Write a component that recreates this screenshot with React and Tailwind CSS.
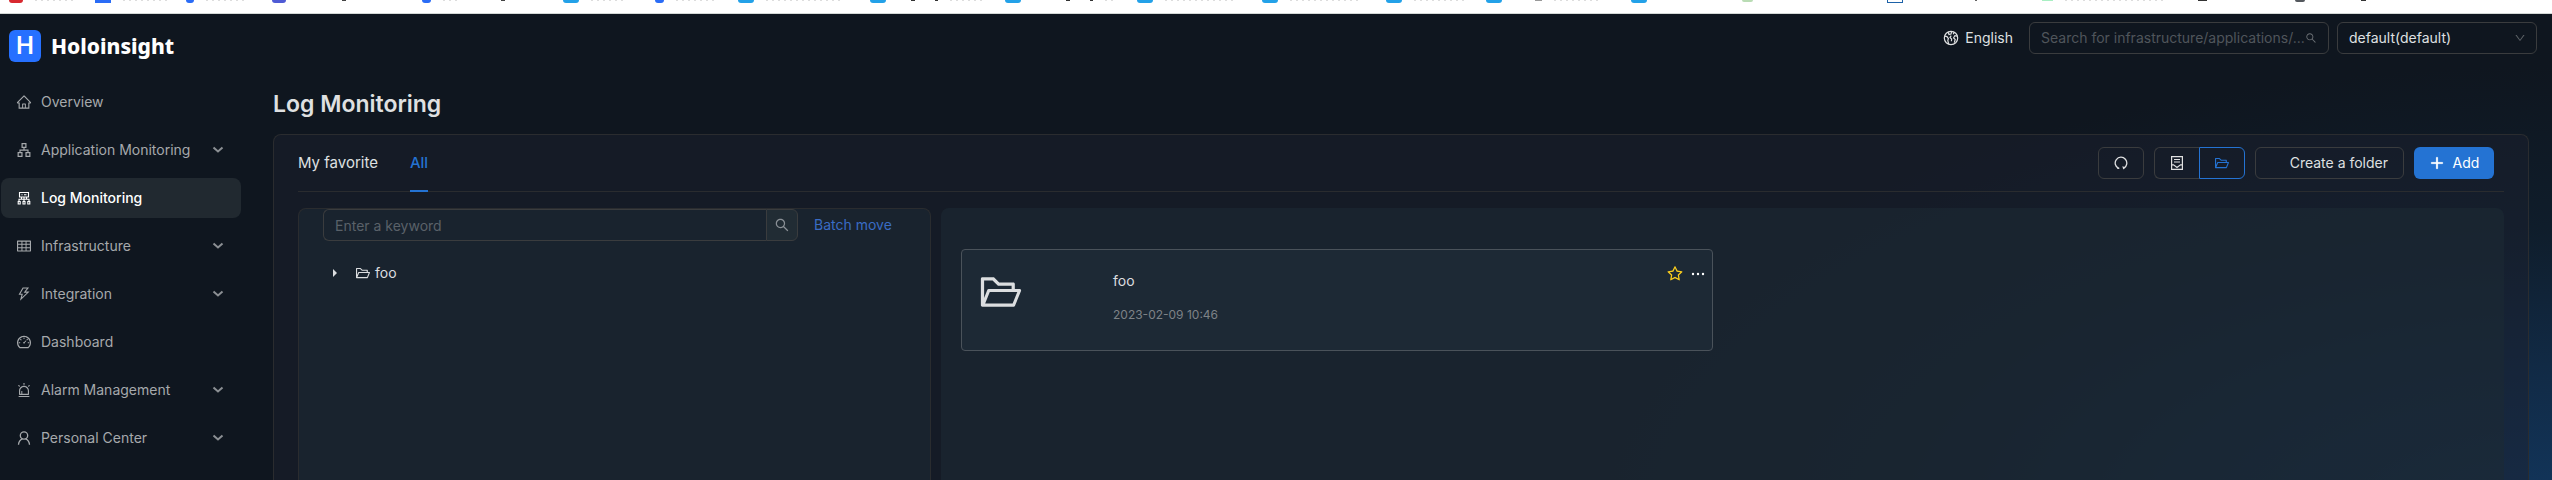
import {
  AiOutlineHome,
  AiOutlineApartment,
  AiOutlineTable,
  AiOutlineThunderbolt,
  AiOutlineDashboard,
  AiOutlineAlert,
  AiOutlineFolderOpen,
  AiOutlineSearch,
  AiOutlineDown,
  AiOutlinePlus,
  AiOutlineStar,
} from "react-icons/ai";

/* Bottom edge of the browser's bookmark bar: [space before, icon width, icon classes, label width] */
const bookmarks = [
  [9, 14, "h-[3px] rounded-b-sm bg-[#d8282f]", 50],
  [22, 16, "h-[3px] bg-[#2a6cf6]", 58],
  [17, 8, "h-[3px] rounded-b bg-[#2a6cf6]", 50],
  [28, 14, "h-[3px] rounded-b bg-[#4f5bd5]", 0],
  [56, 4, "h-px bg-[#444444]", 0],
  [76, 9, "h-[3px] rounded-b-full bg-[#2a6cf6]", 30],
  [40, 4, "h-px bg-[#444444]", 0],
  [58, 16, "h-[3px] rounded-b-sm bg-[#23a1e8]", 44],
  [32, 9, "h-[3px] rounded-b-full bg-[#2a6cf6]", 50],
  [24, 16, "h-[3px] rounded-b-sm bg-[#23a1e8]", 90],
  [26, 16, "h-[3px] rounded-b-sm bg-[#23a1e8]", 0],
  [25, 4, "h-px bg-[#333333]", 0],
  [20, 3, "h-px bg-[#333333]", 44],
  [23, 16, "h-[3px] rounded-b-sm bg-[#23a1e8]", 0],
  [45, 4, "h-px bg-[#333333]", 0],
  [20, 3, "h-px bg-[#333333]", 20],
  [24, 16, "h-[3px] rounded-b-sm bg-[#23a1e8]", 84],
  [25, 16, "h-[3px] rounded-b-sm bg-[#23a1e8]", 84],
  [24, 16, "h-[3px] rounded-b-sm bg-[#23a1e8]", 66],
  [18, 16, "h-[3px] rounded-b-sm bg-[#23a1e8]", 0],
  [33, 7, "h-px bg-[#999999]", 60],
  [29, 16, "h-[3px] rounded-b-sm bg-[#23a1e8]", 0],
  [95, 11, "h-[2px] rounded-b bg-[#b9dcb4]", 0],
  [134, 16, "h-[3px] border border-t-0 border-[#1d62a8]", 0],
  [72, 2, "h-px bg-[#666666]", 0],
  [65, 11, "h-px bg-[#a9efc3]", 110],
  [35, 9, "h-px bg-[#333333]", 0],
  [88, 10, "h-[2px] rounded-b-full bg-[#54585e]", 0],
  [56, 5, "h-px bg-[#333333]", 0],
];

function LogIcon() {
  return (
    <svg viewBox="0 0 16 16" fill="none" stroke="currentColor" strokeWidth="1.1" aria-hidden="true">
      <path d="M3.500 2.500h9v4.500h-9zM5.500 4.800h1M8 4.800h2.500M8 7v2.200M3 11.500V9.200h10v2.300M8 9.200v2.300M5.500 7v2M10.500 7v2" />
      <path d="M2.200 14v-2.500h2V14zM7 14v-2.500h2V14zM11.800 14v-2.500h2V14z" />
    </svg>
  );
}

function PersonIcon() {
  return (
    <svg viewBox="0 0 16 16" fill="none" stroke="currentColor" strokeWidth="1.3" aria-hidden="true">
      <circle cx="8" cy="5.500" r="3.700" />
      <path d="M2.500 14.700C2.700 11.400 4.400 9.700 6.500 8.900M13.500 14.700C13.300 11.400 11.600 9.700 9.500 8.900" />
    </svg>
  );
}

function EarthIcon() {
  return (
    <svg viewBox="0 0 16 16" className="size-4" fill="none" stroke="currentColor" strokeWidth="1.2" aria-hidden="true">
      <circle cx="8" cy="8" r="6.700" />
      <path d="M1.800 6.200l2.200.400 1.400 2-.600 1.800.800 3.600M5.200 2.200l.800 2.300 2-.500.600-2.400M8.200 5.600l-1.200 1.800 1.600 1.600-.200 2.200M14.300 6.200l-2.400-.600-1.300 2.200 1.600 1.700-.900 3.200M11.200 2.400l-1 1.800" />
    </svg>
  );
}

function RefreshIcon() {
  return (
    <svg viewBox="0 0 14 14" className="size-3.5" fill="none" stroke="currentColor" strokeWidth="1.300" aria-hidden="true">
      <path d="M4.600 12.300A5.800 5.800 0 1 1 9.800 12.100" />
      <path d="M8.300 10.300l3.200.900-2.200 2.400z" fill="currentColor" stroke="none" />
      <path d="M3.300 12.300h2" />
    </svg>
  );
}

function DocumentIcon() {
  return (
    <svg viewBox="0 0 14 14" className="size-3.5" fill="none" stroke="currentColor" strokeWidth="1.200" aria-hidden="true">
      <path d="M1.600.600h10.800v12.800H1.600z" />
      <path d="M4 3.500h6M4 6h6M1.800 8.800h1.700L7 11.400l3.500-2.600h1.700" />
    </svg>
  );
}

function MoreIcon() {
  return (
    <svg viewBox="0 0 16 16" className="size-4" fill="currentColor" aria-hidden="true">
      <circle cx="3" cy="8" r="1.200" />
      <circle cx="8" cy="8" r="1.200" />
      <circle cx="13" cy="8" r="1.200" />
    </svg>
  );
}

const menu = [
  { label: "Overview", Icon: AiOutlineHome },
  { label: "Application Monitoring", Icon: AiOutlineApartment, sub: true },
  { label: "Log Monitoring", Icon: LogIcon, active: true },
  { label: "Infrastructure", Icon: AiOutlineTable, sub: true },
  { label: "Integration", Icon: AiOutlineThunderbolt, sub: true },
  { label: "Dashboard", Icon: AiOutlineDashboard },
  { label: "Alarm Management", Icon: AiOutlineAlert, sub: true },
  { label: "Personal Center", Icon: PersonIcon, sub: true },
];

function BookmarkBar() {
  return (
    <div className="flex h-3.5 shrink-0 items-start overflow-hidden border-b border-[#d3d8d6] bg-white">
      {bookmarks.map(([space, width, look, label], i) => (
        <div key={i} className="flex shrink-0 items-start" style={{ marginLeft: space }}>
          <span className={look} style={{ width }} />
          {label > 0 && (
            <span
              className="h-px bg-[repeating-linear-gradient(90deg,#dddddd_0_2px,#ffffff_2px_6px)] bg-clip-content pl-3"
              style={{ width: label }}
            />
          )}
        </div>
      ))}
    </div>
  );
}

function Sidebar() {
  return (
    <aside className="flex w-[250px] shrink-0 flex-col bg-[#0f161f]">
      <div className="flex items-center gap-2.5 px-[9px] pt-4">
        <span className="flex size-8 items-center justify-center rounded-md bg-[#2670ff] text-2xl font-semibold text-white">H</span>
        <span className="font-['Noto_Sans',sans-serif] text-[21px] leading-8 font-extrabold text-white">Holoinsight</span>
      </div>
      <nav className="mt-5 flex flex-col gap-2 pr-[9px] pl-px">
        {menu.map(({ label, Icon, sub, active }) => (
          <a
            key={label}
            href="#"
            className={
              active
                ? "flex h-10 items-center gap-[9px] rounded-lg bg-[#212930] pr-[17px] pl-[15px] font-medium text-white"
                : "flex h-10 items-center gap-[9px] rounded-lg pr-[17px] pl-[15px] text-[#a6a9ac]"
            }
          >
            <span className="size-4 text-base">
              <Icon />
            </span>
            <span className="grow">{label}</span>
            {sub && (
              <svg viewBox="0 0 12 12" className="size-3" fill="none" stroke="#8b8f93" strokeWidth="2" aria-hidden="true">
                <path d="M1.500 3.500L6 7.500l4.500-4" />
              </svg>
            )}
          </a>
        ))}
      </nav>
    </aside>
  );
}

function Header() {
  return (
    <header className="flex items-center justify-end pt-2 pr-[15px]">
      <button type="button" className="flex items-center gap-1.5 text-[#dfe0e1]">
        <EarthIcon />
        English
      </button>
      <label className="ml-4 flex h-8 w-[300px] items-center rounded-md border border-[#3a3c3e] px-[11px]">
        <input
          type="text"
          aria-label="Search"
          placeholder="Search for infrastructure/applications/..."
          className="min-w-0 grow bg-transparent text-white outline-none placeholder:text-[#4f555b]"
        />
        <AiOutlineSearch className="size-3 text-[#6c7176]" />
      </label>
      <div className="ml-2 grid w-[200px] grid-cols-1 items-center">
        <select
          aria-label="Workspace"
          className="col-start-1 row-start-1 h-8 appearance-none rounded-md border border-[#3a3c3e] bg-transparent px-[11px] text-[#dfe0e1]"
        >
          <option>default(default)</option>
        </select>
        <AiOutlineDown className="pointer-events-none col-start-1 row-start-1 mr-[11px] size-3 justify-self-end text-[#5d6267]" />
      </div>
    </header>
  );
}

function Toolbar() {
  return (
    <div className="flex items-center gap-2.5 pr-2.5 text-[#dfe0e1]">
      <button type="button" aria-label="Refresh" className="flex h-8 w-[46px] items-center justify-center rounded-md border border-[#3a3c3e]">
        <RefreshIcon />
      </button>
      <div className="flex">
        <button type="button" aria-label="List view" className="flex h-8 w-[45px] items-center justify-center rounded-l-md border border-r-0 border-[#3a3c3e]">
          <DocumentIcon />
        </button>
        <button type="button" aria-label="Folder view" className="flex h-8 w-[46px] items-center justify-center rounded-r-md border border-[#2473d3] text-[#2473d3]">
          <AiOutlineFolderOpen className="size-4" />
        </button>
      </div>
      <button type="button" className="h-8 rounded-md border border-[#3a3c3e] pr-[15px] pl-[34px]">
        Create a folder
      </button>
      <button type="button" className="flex h-8 w-20 items-center justify-center gap-2 rounded-md bg-[#2473d3] text-white">
        <AiOutlinePlus className="size-4" strokeWidth="50" />
        Add
      </button>
    </div>
  );
}

function FolderTree() {
  return (
    <section className="w-[633px] shrink-0 rounded-t-lg border border-b-0 border-[#2a2c2f] bg-[#1c293499] px-6">
      <div className="flex items-center gap-4">
        <div className="flex w-[475px]">
          <input
            type="text"
            aria-label="Keyword"
            placeholder="Enter a keyword"
            className="h-8 min-w-0 grow rounded-l-md border border-r-0 border-[#3a3c3e] bg-transparent px-[11px] text-white outline-none placeholder:text-[#5a6169]"
          />
          <button type="button" aria-label="Search" className="flex size-8 items-center justify-center rounded-r-md border border-[#3a3c3e] bg-[#212c34] text-[#8a9096]">
            <AiOutlineSearch className="size-4" />
          </button>
        </div>
        <a href="#" className="text-[#3a6cc4]">
          Batch move
        </a>
      </div>
      <div className="mt-5 flex h-6 items-center text-[#dcdee0]">
        <svg viewBox="0 0 4 8" className="ml-2.5 h-2 w-1" fill="currentColor" aria-hidden="true">
          <path d="M0 0l4 4-4 4z" />
        </svg>
        <AiOutlineFolderOpen className="ml-[18px] size-4" />
        <span className="ml-1">foo</span>
      </div>
    </section>
  );
}

function FolderGrid() {
  return (
    <section className="grid grow grid-cols-2 content-start gap-5 rounded-t-lg bg-[#1c293499] px-5 pt-[41px]">
      <article className="flex h-[102px] rounded-sm border border-[#4a525a] bg-[#1d2935] pr-1.5 pl-4 text-[#dcdee0]">
        <AiOutlineFolderOpen className="mt-[19px] size-[46px]" />
        <div className="ml-[89px] flex grow flex-col pt-5">
          <span className="leading-[22px]">foo</span>
          <time className="mt-3 text-xs leading-[22px] text-[#7d8287]">2023-02-09 10:46</time>
        </div>
        <div className="flex h-6 items-center gap-1.5 pt-6">
          <button type="button" aria-label="Favorite" className="text-[#fbcd1e]">
            <AiOutlineStar className="size-[18px]" />
          </button>
          <button type="button" aria-label="More" className="text-white">
            <MoreIcon />
          </button>
        </div>
      </article>
    </section>
  );
}

export default function App() {
  return (
    <div className="flex h-screen flex-col overflow-hidden bg-[#0f161f] font-['Inter',sans-serif] text-sm">
      <BookmarkBar />
      <div className="flex min-h-0 grow">
        <Sidebar />
        <div className="flex min-w-0 grow flex-col bg-[radial-gradient(ellipse_1000px_460px_at_100%_110%,#12375f_0%,#112a45_35%,#0f1d2b_65%,#0f161f_100%)]">
          <Header />
          <main className="flex min-h-0 grow flex-col px-[23px]">
            <h1 className="mt-8 text-[23px] leading-9 font-semibold text-[#dfe0e1]">Log Monitoring</h1>
            <div className="mt-3 flex min-h-0 grow flex-col rounded-t-lg border border-b-0 border-[#2a2c2f] bg-[#1b202d80] px-6">
              <div className="flex h-[57px] shrink-0 items-stretch justify-between border-b border-[#2a2c2f]">
                <div className="flex gap-8 text-[15px]">
                  <button type="button" className="text-[#dfe0e1]">
                    My favorite
                  </button>
                  <button type="button" className="-mb-px border-b-2 border-[#2473d3] pt-px font-medium text-[#2473d3]">
                    All
                  </button>
                </div>
                <Toolbar />
              </div>
              <div className="mt-4 flex min-h-0 grow gap-2.5">
                <FolderTree />
                <FolderGrid />
              </div>
            </div>
          </main>
        </div>
      </div>
    </div>
  );
}
